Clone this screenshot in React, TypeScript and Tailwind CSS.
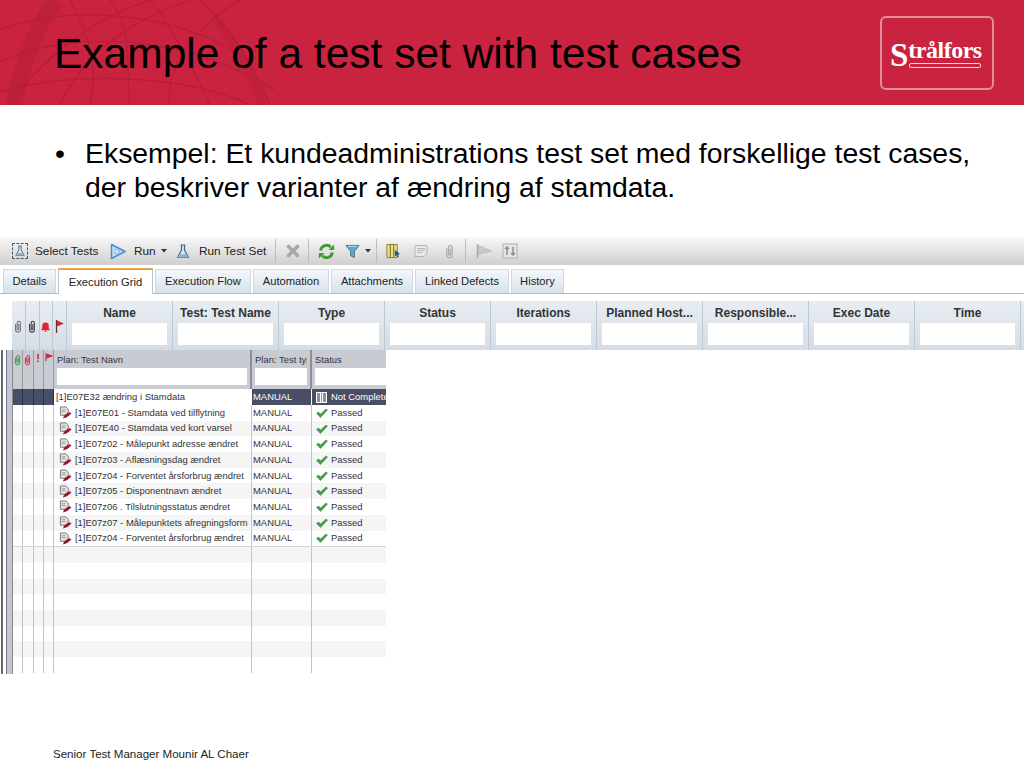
const TOP_COLUMNS = ['Name', 'Test: Test Name', 'Type', 'Status', 'Iterations', 'Planned Host...', 'Responsible...', 'Exec Date', 'Time'];
const TABS = ['Details', 'Execution Grid', 'Execution Flow', 'Automation', 'Attachments', 'Linked Defects', 'History'];
const TAB_WIDTHS = ['w-[53px]', 'w-[95px]', 'w-[96px]', 'w-[76px]', 'w-[82px]', 'w-[94px]', 'w-[53px]'];

const TESTS = [
  '[1]E07E01 - Stamdata ved tilflytning',
  '[1]E07E40 - Stamdata ved kort varsel',
  '[1]E07z02 - Målepunkt adresse ændret',
  '[1]E07z03 - Aflæsningsdag ændret',
  '[1]E07z04 - Forventet årsforbrug ændret',
  '[1]E07z05 - Disponentnavn ændret',
  '[1]E07z06 . Tilslutningsstatus ændret',
  '[1]E07z07 - Målepunktets afregningsform',
  '[1]E07z04 - Forventet årsforbrug ændret',
];

function TestIcon() {
  return (
    <svg viewBox="0 0 14 14" className="h-[13px] w-[13px] shrink-0">
      <path d="M1.5 1h6l2.5 2.5V10H1.5z" fill="#e2e2e2" stroke="#777" strokeWidth="1" />
      <path d="M3 4h4M3 6h4" stroke="#888" strokeWidth="0.8" />
      <path d="M4 13.5l2-3.5 4.5-3.5 3 1.5-5 4z" fill="#8e1a30" />
      <path d="M9.5 7.5l3-1" stroke="#d96a7c" strokeWidth="1" />
    </svg>
  );
}

function PassedIcon() {
  return (
    <svg viewBox="0 0 12 10" className="h-[10px] w-[12px] shrink-0">
      <path d="M0.5 5.5l2-1.5 2 2L10 1l1.5 1-7 7.5z" fill="#43a047" stroke="#2e8034" strokeWidth="0.5" strokeLinejoin="round" />
    </svg>
  );
}

// upright paper clip, the lucide one is tilted
function ClipIcon({ color, className }: { color: string; className: string }) {
  return (
    <svg viewBox="0 0 10 16" className={className} fill="none" stroke={color} strokeWidth="1.4">
      <path d="M2 4.5V12a3 3 0 0 0 6 0V3.5a2 2 0 0 0-4 0V11a1 1 0 0 0 2 0V5" />
    </svg>
  );
}

function FlaskIcon({ className, filled }: { className: string; filled?: boolean }) {
  return (
    <svg viewBox="0 0 16 16" className={className} fill="none" stroke="#4a6784" strokeWidth="1.2" strokeLinejoin="round">
      <path d="M5.5 1.5h5M6.5 1.5v5L2.5 14h11l-4-7.5v-5" fill={filled ? '#dbe6f0' : 'none'} />
      <path d="M4.5 10.5h7L13.5 14h-11z" fill={filled ? '#8fb4d6' : '#9ab0c4'} stroke="none" />
    </svg>
  );
}

function DropTriangle({ className }: { className: string }) {
  return (
    <svg viewBox="0 0 6 4" className={className}>
      <path d="M0 0h6L3 3.5z" fill="#333" />
    </svg>
  );
}

function GridCols() {
  return (
    <>
      {[0, 1, 2, 3].map((i) => (
        <div key={i} className="h-full w-[10.25px] shrink-0 border-r border-[#c4c4c4]" />
      ))}
    </>
  );
}

function Row({ striped, children }: { striped: boolean; children: React.ReactNode }) {
  return (
    <div className={`flex h-[15.7px] items-center ${striped ? 'bg-[#f5f5f5]' : 'bg-white'}`}>
      <GridCols />
      {children}
    </div>
  );
}

export default function App() {
  return (
    <div className="flex h-[768px] w-[1024px] flex-col overflow-hidden bg-white font-['Liberation_Sans',sans-serif] text-black">
      {/* Red banner */}
      <header className="relative flex h-[105px] shrink-0 items-center justify-between bg-[#c9233f] pl-[54px] pr-[30px]">
        <svg viewBox="0 0 320 105" className="absolute left-0 top-0 h-[105px] w-[320px]" fill="none" stroke="#b01d38" strokeWidth="1.3" opacity="0.7">
          <path d="M0 30C60 5 170 8 250 60M0 62C70 30 180 32 275 90M10 105C40 60 90 20 150 0M60 105C80 60 120 25 190 0M130 105C125 70 135 30 110 0M210 105C190 60 170 25 150 0M270 105C250 55 225 25 200 0M0 92C70 70 190 75 250 105M90 105C100 60 85 30 70 0M170 105C165 70 190 30 240 0" />
          <path d="M55 0C35 30 20 70 14 105" stroke="#a81a34" strokeWidth="16" opacity="0.45" />
          <path d="M215 20C235 40 250 70 262 105" stroke="#a81a34" strokeWidth="9" opacity="0.3" />
        </svg>
        <h1 className="relative mt-[4px] text-[42.5px] leading-none">Example of a test set with test cases</h1>
        <div className="relative flex h-[74px] w-[114px] flex-col items-start justify-center rounded-[6px] border-2 border-[#e58c9c] pl-[8px]">
          <div className="-mt-[6px] flex items-end font-['Liberation_Serif',serif] font-bold leading-none text-white">
            <span className="relative top-[8px] text-[33px] leading-[30px]">S</span>
            <span className="text-[24px] leading-[24px] tracking-[-0.5px]">trålfors</span>
          </div>
          <div className="ml-[19px] mt-[1px] h-[5px] w-[72px] rounded-[2px] border border-[#f6d5db]" />
        </div>
      </header>

      {/* Bullet */}
      <div className="mt-[31px] flex h-[69px] shrink-0 pl-[55px] text-[28.4px] leading-[34px] text-black">
        <span className="w-[30px] shrink-0">•</span>
        <p className="whitespace-nowrap">
          Eksempel: Et kundeadministrations test set med forskellige test cases,
          <br />
          der beskriver varianter af ændring af stamdata.
        </p>
      </div>

      {/* Toolbar */}
      <div className="mt-[32px] flex h-[28px] shrink-0 items-center bg-gradient-to-b from-[#f8f8f8] to-[#cfcfcf] pl-[12px] text-[11.8px] text-[#222]">
        <span className="flex h-[16px] w-[16px] shrink-0 items-center justify-center border border-dashed border-[#3f5c78]">
          <FlaskIcon className="h-[12px] w-[12px]" />
        </span>
        <span className="ml-[7px] w-[63px] whitespace-nowrap pt-[2px]">Select Tests</span>
        <svg viewBox="0 0 16 16" className="ml-[12px] h-[17px] w-[16px]">
          <path d="M1.5 1L15 8 1.5 15z" fill="#c9def4" stroke="#4a8ad0" strokeWidth="1.5" strokeLinejoin="round" />
          <path d="M5 5.5L10 8l-5 2.5z" fill="#f2f7fc" stroke="#6fa5dc" strokeWidth="0.8" />
        </svg>
        <span className="ml-[8px] w-[21px] pt-[2px]">Run</span>
        <DropTriangle className="ml-[6px] h-[4px] w-[6px]" />
        <FlaskIcon className="ml-[8px] h-[17px] w-[16px]" filled />
        <span className="ml-[8px] w-[66px] whitespace-nowrap pt-[2px]">Run Test Set</span>
        <div className="ml-[10px] h-[24px] w-px bg-[#bdbdbd]" />
        <svg viewBox="0 0 14 14" className="ml-[10px] h-[14px] w-[14px]">
          <path d="M2.5 2.5l9 9M11.5 2.5l-9 9" stroke="#a8a8a8" strokeWidth="3.6" strokeLinecap="round" />
        </svg>
        <div className="ml-[8px] h-[24px] w-px bg-[#bdbdbd]" />
        <svg viewBox="0 0 16 16" className="ml-[9px] h-[17px] w-[17px]" fill="none" stroke="#3f9b36" strokeWidth="2.8">
          <path d="M2.5 7a5.5 5.5 0 0 1 9.5-3" />
          <path d="M13.5 9A5.5 5.5 0 0 1 4 12" />
          <path d="M10 6.5h5.2V1.5zM6 9.5H.8v5z" fill="#3f9b36" stroke="none" />
        </svg>
        <svg viewBox="0 0 16 16" className="ml-[10px] h-[15px] w-[15px]">
          <path d="M1 1.5h14L10 8v6.5l-4-2V8z" fill="#63a8cc" stroke="#41748f" strokeWidth="1" strokeLinejoin="round" />
          <path d="M3 2.5h10" stroke="#c8e2f0" strokeWidth="1" />
        </svg>
        <DropTriangle className="ml-[5px] h-[4px] w-[6px]" />
        <div className="ml-[5px] h-[24px] w-px bg-[#bdbdbd]" />
        <svg viewBox="0 0 16 16" className="ml-[9px] h-[16px] w-[15px]">
          <path d="M1 1h11v14H1z" fill="#efe08a" stroke="#8d7b22" />
          <path d="M4.6 1v14M8.2 1v14" stroke="#6e6018" />
          <path d="M9.5 7l5.5 4.2-2.4.4 1 2.6-1.4.6-1-2.6-1.7 1.6z" fill="#24508a" />
        </svg>
        <svg viewBox="0 0 14 14" className="ml-[13px] h-[14px] w-[14px]" fill="none" stroke="#b5b5b5">
          <path d="M1 1.5h12v8l-3 3H1z" fill="#e8e8e8" />
          <path d="M3 4.5h8M3 6.5h8M3 8.5h5" />
        </svg>
        <ClipIcon color="#adadad" className="ml-[17px] h-[15px] w-[9px]" />
        <div className="ml-[11px] h-[24px] w-px bg-[#bdbdbd]" />
        <svg viewBox="0 0 18 16" className="ml-[9px] h-[16px] w-[18px]">
          <path d="M2.5 1v14" stroke="#aaa" strokeWidth="1.5" />
          <path d="M3.5 2.5l13 5.5-13 3.5z" fill="#c8c8c8" stroke="#b0b0b0" strokeWidth="0.6" />
        </svg>
        <svg viewBox="0 0 16 16" className="ml-[9px] h-[16px] w-[16px]">
          <rect x="1" y="1" width="14" height="14" fill="#e4e4e4" stroke="#b0b0b0" />
          <path d="M5 12V4M3 6l2-2 2 2M11 4v8M9 10l2 2 2-2" fill="none" stroke="#8e8e8e" strokeWidth="1.5" />
        </svg>
      </div>

      {/* Tabs */}
      <div className="flex h-[29px] shrink-0 items-end gap-[2px] border-b border-[#a9bccb] pl-[3px] text-[11.2px] text-[#222]">
        {TABS.map((tab, i) =>
          tab === 'Execution Grid' ? (
            <div key={tab} className={`${TAB_WIDTHS[i]} relative top-px flex h-[26px] items-center justify-center border-x border-t-2 border-x-[#b6c4d0] border-t-[#e8a33d] bg-white`}>
              {tab}
            </div>
          ) : (
            <div key={tab} className={`${TAB_WIDTHS[i]} flex h-[24px] items-center justify-center border-x border-t border-[#cfd8e0] bg-gradient-to-b from-[#f4f7fa] to-[#d6e2ec]`}>
              {tab}
            </div>
          ),
        )}
      </div>

      {/* Execution grid header */}
      <div className="ml-[12px] mt-[7px] flex h-[49px] w-[1012px] shrink-0 bg-gradient-to-b from-[#e8edf2] to-[#d4dde5]">
        <div className="flex w-[13.75px] shrink-0 items-center justify-center border-r border-[#bcc8d2] pt-[2px]">
          <ClipIcon color="#777" className="h-[15px] w-[8px]" />
        </div>
        <div className="flex w-[13.75px] shrink-0 items-center justify-center border-r border-[#bcc8d2] pt-[2px]">
          <ClipIcon color="#444" className="h-[15px] w-[8px]" />
        </div>
        <div className="flex w-[13.75px] shrink-0 items-center justify-center border-r border-[#bcc8d2] pt-[2px]">
          <svg viewBox="0 0 12 12" className="h-[11px] w-[11px]">
            <path d="M1 10c1.5-1 1.5-3 1.5-5a3.5 3.5 0 0 1 7 0c0 2 0 4 1.5 5z" fill="#e0242f" />
            <circle cx="6" cy="11" r="1" fill="#e0242f" />
          </svg>
        </div>
        <div className="flex w-[13.75px] shrink-0 items-center justify-center border-r border-[#bcc8d2]">
          <svg viewBox="0 0 10 14" className="h-[14px] w-[10px]">
            <path d="M1.5 1v13" stroke="#6b3030" strokeWidth="1.3" />
            <path d="M2 1.5l7 3-7 3z" fill="#d8232f" />
          </svg>
        </div>
        {TOP_COLUMNS.map((col) => (
          <div key={col} className="flex w-[106px] shrink-0 flex-col items-center border-r border-[#bcc8d2] px-[5px] pt-[5px]">
            <span className="h-[17px] whitespace-nowrap text-[12px] font-bold leading-[14px] text-[#333]">{col}</span>
            <div className="h-[22px] w-full bg-white" />
          </div>
        ))}
      </div>

      {/* Lower grid */}
      <div className="flex h-[324px] shrink-0">
        <div className="flex w-[13px] shrink-0">
          <div className="w-[1px]" />
          <div className="w-[2px] bg-[#666]" />
          <div className="w-[3px]" />
          <div className="w-[1px] bg-[#6d7390]" />
          <div className="w-[5px] bg-[#c4c6d0]" />
          <div className="w-[1px] bg-[#888]" />
        </div>
        <div className="w-[373px] shrink-0 text-[9.45px] text-[#333]">
          {/* Header */}
          <div className="flex h-[39px] bg-[#c9cbd3]">
            <div className="flex w-[41px] shrink-0">
              <div className="flex w-[10.25px] justify-center border-r border-[#999] pt-[4px]">
                <ClipIcon color="#2f9c46" className="h-[12px] w-[7px]" />
              </div>
              <div className="flex w-[10.25px] justify-center border-r border-[#999] pt-[4px]">
                <ClipIcon color="#c2344a" className="h-[12px] w-[7px]" />
              </div>
              <div className="w-[10.25px] border-r border-[#999] pt-[2px] text-center text-[11px] font-bold leading-[12px] text-[#d0202c]">!</div>
              <div className="w-[10.25px] border-r border-[#999] pl-[1px] pt-[3px]">
                <svg viewBox="0 0 9 8" className="h-[8px] w-[9px]">
                  <path d="M1 0v8" stroke="#8a3030" />
                  <path d="M1.5 0.5l7 2.5-7 2.5z" fill="#d0202c" />
                </svg>
              </div>
            </div>
            <div className="w-[198px] shrink-0 border-r-2 border-[#8d8f98] px-[3px] pt-[4px]">
              <div className="h-[14px] leading-[12px]">Plan: Test Navn</div>
              <div className="h-[17px] bg-white" />
            </div>
            <div className="w-[60px] shrink-0 border-r-2 border-[#8d8f98] px-[3px] pt-[4px]">
              <div className="h-[14px] overflow-hidden whitespace-nowrap leading-[12px]">Plan: Test typ</div>
              <div className="h-[17px] bg-white" />
            </div>
            <div className="flex-1 pl-[3px] pt-[4px]">
              <div className="h-[14px] leading-[12px]">Status</div>
              <div className="h-[17px] bg-white" />
            </div>
          </div>

          {/* Selected row */}
          <div className="flex h-[16px] items-center whitespace-nowrap bg-[#474e66] text-white">
            <div className="flex h-full w-[41px] shrink-0">
              {[0, 1, 2, 3].map((i) => (
                <div key={i} className="w-[10.25px] border-r border-[#2e3346]" />
              ))}
            </div>
            <div className="flex h-full w-[198px] shrink-0 items-center bg-white pl-[2px] text-[#333]">[1]E07E32 ændring i Stamdata</div>
            <div className="flex h-full w-[60px] shrink-0 items-center border-r border-white pl-[1px]">MANUAL</div>
            <div className="flex h-full flex-1 items-center overflow-hidden pl-[4px]">
              <span className="mr-[4px] flex h-[11px] w-[11px] shrink-0 justify-center border border-white bg-[#8b90a3]">
                <span className="h-full w-[3px] border-x border-white" />
              </span>
              Not Complete
            </div>
          </div>

          {/* Test rows */}
          {TESTS.map((name, i) => (
            <Row key={i} striped={i % 2 === 1}>
              <div className="flex h-full w-[198px] shrink-0 items-center gap-[3px] whitespace-nowrap border-r border-[#c4c4c4] pl-[5px]">
                <TestIcon />
                {name}
              </div>
              <div className="flex h-full w-[60px] shrink-0 items-center border-r border-[#c4c4c4] pl-[1px]">MANUAL</div>
              <div className="flex h-full flex-1 items-center gap-[3px] pl-[4px]">
                <PassedIcon />
                Passed
              </div>
            </Row>
          ))}

          {/* Empty rows */}
          <div className="h-px bg-[#d4d4d4]" />
          {[0, 1, 2, 3, 4, 5, 6, 7].map((i) => (
            <Row key={i} striped={i % 2 === 0}>
              <div className="h-full w-[198px] shrink-0 border-r border-[#c4c4c4]" />
              <div className="h-full w-[60px] shrink-0 border-r border-[#c4c4c4]" />
            </Row>
          ))}
        </div>
      </div>

      {/* Footer */}
      <footer className="mt-[73px] pl-[53px] text-[11.55px] leading-[14px] text-[#222]">Senior Test Manager Mounir AL Chaer</footer>
    </div>
  );
}
